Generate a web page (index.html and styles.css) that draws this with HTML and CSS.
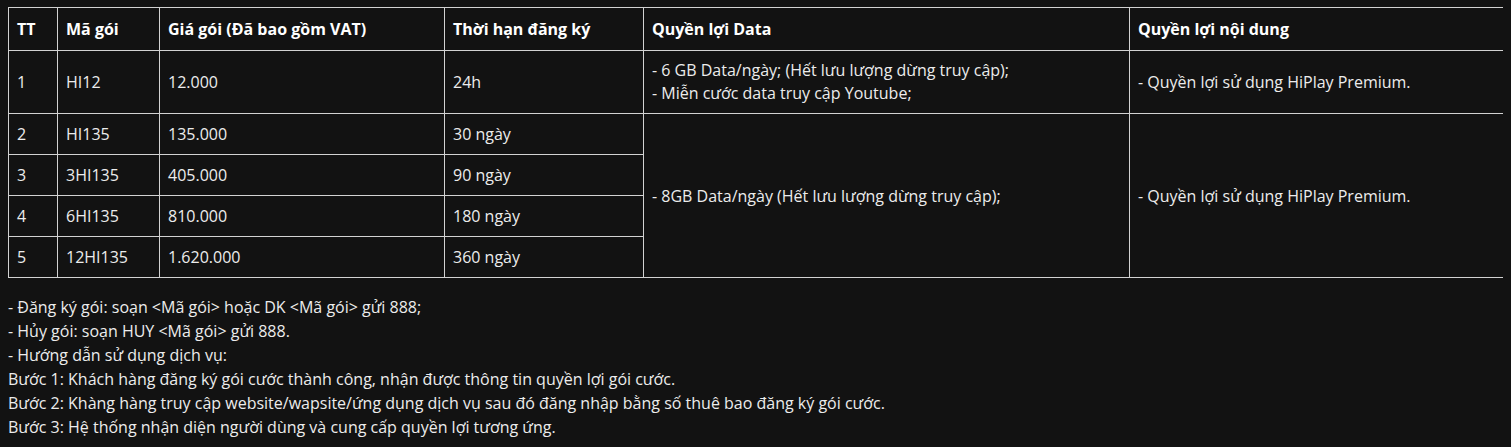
FILE: index.html
```html
<!DOCTYPE html>
<html lang="vi">
<head>
<meta charset="utf-8">
<title>Gói cước HiPlay</title>
<link rel="stylesheet" href="styles.css">
</head>
<body>
<table class="pkg">
  <colgroup>
    <col class="c1"><col class="c2"><col class="c3"><col class="c4"><col class="c5"><col class="c6">
  </colgroup>
  <thead>
    <tr>
      <th>TT</th>
      <th>Mã gói</th>
      <th>Giá gói (Đã bao gồm VAT)</th>
      <th>Thời hạn đăng ký</th>
      <th>Quyền lợi Data</th>
      <th>Quyền lợi nội dung</th>
    </tr>
  </thead>
  <tbody>
    <tr class="tall">
      <td>1</td>
      <td>HI12</td>
      <td>12.000</td>
      <td>24h</td>
      <td>- 6 GB Data/ngày; (Hết lưu lượng dừng truy cập);<br>- Miễn cước data truy cập Youtube;</td>
      <td>- Quyền lợi sử dụng HiPlay Premium.</td>
    </tr>
    <tr>
      <td>2</td>
      <td>HI135</td>
      <td>135.000</td>
      <td>30 ngày</td>
      <td rowspan="4">- 8GB Data/ngày (Hết lưu lượng dừng truy cập);</td>
      <td rowspan="4">- Quyền lợi sử dụng HiPlay Premium.</td>
    </tr>
    <tr>
      <td>3</td>
      <td>3HI135</td>
      <td>405.000</td>
      <td>90 ngày</td>
    </tr>
    <tr>
      <td>4</td>
      <td>6HI135</td>
      <td>810.000</td>
      <td>180 ngày</td>
    </tr>
    <tr>
      <td>5</td>
      <td>12HI135</td>
      <td>1.620.000</td>
      <td>360 ngày</td>
    </tr>
  </tbody>
</table>
<div class="notes">
  <p>- Đăng ký gói: soạn &lt;Mã gói&gt; hoặc DK &lt;Mã gói&gt; gửi 888;</p>
  <p>- Hủy gói: soạn HUY &lt;Mã gói&gt; gửi 888.</p>
  <p>- Hướng dẫn sử dụng dịch vụ:</p>
  <p>Bước 1: Khách hàng đăng ký gói cước thành công, nhận được thông tin quyền lợi gói cước.</p>
  <p>Bước 2: Khàng hàng truy cập website/wapsite/ứng dụng dịch vụ sau đó đăng nhập bằng số thuê bao đăng ký gói cước.</p>
  <p>Bước 3: Hệ thống nhận diện người dùng và cung cấp quyền lợi tương ứng.</p>
</div>
</body>
</html>
```
FILE: styles.css
```css
html, body {
  background: #121212;
}
body {
  margin: 7px 8px 8px 8px;
  color: #ececec;
  font-family: "Open Sans", "Noto Sans", sans-serif;
  font-size: 16px;
  line-height: 24px;
}
.pkg {
  width: 1495px;
  table-layout: fixed;
  border-collapse: collapse;
}
.c1 { width: 49px; }
.c2 { width: 102px; }
.c3 { width: 285px; }
.c4 { width: 199px; }
.c5 { width: 486px; }
.c6 { width: 374px; }
.pkg th,
.pkg td {
  border: 1px solid #d2d2d2;
  padding: 8px;
  text-align: left;
  vertical-align: middle;
  font-weight: 400;
}
.pkg th {
  font-weight: 700;
  color: #ffffff;
  padding-top: 9px;
  padding-bottom: 9px;
}
.pkg tr.tall td {
  line-height: 23px;
}
.notes {
  margin-top: 17px;
}
.notes p {
  margin: 0;
}
```
